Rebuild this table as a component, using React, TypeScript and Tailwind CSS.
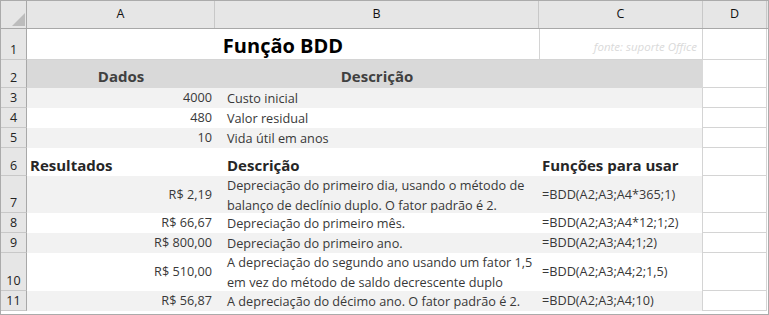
import React from 'react'

type Row = {
  n: number
  h: string
  fill: string
  a?: string
  b?: string[]
  c?: string
}

const rows: Row[] = [
  { n: 3, h: 'h-[20px]', fill: 'bg-[#f2f2f2]', a: '4000', b: ['Custo inicial'] },
  { n: 4, h: 'h-[20px]', fill: 'bg-white', a: '480', b: ['Valor residual'] },
  { n: 5, h: 'h-[20px]', fill: 'bg-[#f2f2f2]', a: '10', b: ['Vida útil em anos'] },
]

const results: Row[] = [
  {
    n: 7,
    h: 'h-[37px]',
    fill: 'bg-[#f2f2f2]',
    a: 'R$ 2,19',
    b: ['Depreciação do primeiro dia, usando o método de', 'balanço de declínio duplo. O fator padrão é 2.'],
    c: '=BDD(A2;A3;A4*365;1)',
  },
  { n: 8, h: 'h-[20px]', fill: 'bg-white', a: 'R$ 66,67', b: ['Depreciação do primeiro mês.'], c: '=BDD(A2;A3;A4*12;1;2)' },
  { n: 9, h: 'h-[20px]', fill: 'bg-[#f2f2f2]', a: 'R$ 800,00', b: ['Depreciação do primeiro ano.'], c: '=BDD(A2;A3;A4;1;2)' },
  {
    n: 10,
    h: 'h-[38px]',
    fill: 'bg-white',
    a: 'R$ 510,00',
    b: ['A depreciação do segundo ano usando um fator 1,5', 'em vez do método de saldo decrescente duplo'],
    c: '=BDD(A2;A3;A4;2;1,5)',
  },
  { n: 11, h: 'h-[20px]', fill: 'bg-[#f2f2f2]', a: 'R$ 56,87', b: ['A depreciação do décimo ano. O fator padrão é 2.'], c: '=BDD(A2;A3;A4;10)' },
]

function RowHead({ n }: { n: number }) {
  return (
    <div className="w-[26px] shrink-0 bg-[#e6e6e6] border-r border-r-[#a8a8a8] border-b border-b-[#c8c8c8] flex items-end justify-center pb-[1px] text-[12.5px] leading-[16px] text-[#222]">
      {n}
    </div>
  )
}

function ColD() {
  return <div className="w-[64px] shrink-0 border-b border-r border-[#d4d4d4] bg-white" />
}

function DataRow({ r }: { r: Row }) {
  return (
    <div className={`flex ${r.h}`}>
      <RowHead n={r.n} />
      <div className={`flex ${r.fill}`}>
        <div className="w-[188px] flex items-center justify-end pr-[3px]">{r.a}</div>
        <div className="w-[324px] flex flex-col justify-center pl-[12px] leading-[20px] whitespace-nowrap">
          {r.b?.map((line) => (
            <span key={line}>{line}</span>
          ))}
        </div>
        <div className="w-[164px] flex items-center pl-[3px] border-r border-r-[#d4d4d4]">{r.c}</div>
      </div>
      <ColD />
    </div>
  )
}

export default function App() {
  return (
    <div
      className="w-[769px] h-[315px] overflow-hidden bg-white border border-[#ababab] text-[12.7px] text-[#383838]"
      style={{ fontFamily: '"Open Sans", "Noto Sans", Arial, sans-serif' }}
    >
      {/* column headers */}
      <div className="flex h-[28px] bg-[#e6e6e6] border-b border-b-[#a8a8a8] text-[12.5px] text-[#111]">
        <div className="w-[26px] shrink-0 border-r border-r-[#a8a8a8] relative">
          <svg className="absolute left-[11px] top-[12px]" width="13" height="13" viewBox="0 0 13 13">
            <polygon points="13,0 13,13 0,13" fill="#bcbcbc" />
          </svg>
        </div>
        <div className="w-[188px] border-r border-r-[#c8c8c8] flex items-center justify-center">A</div>
        <div className="w-[324px] border-r border-r-[#c8c8c8] flex items-center justify-center">B</div>
        <div className="w-[164px] border-r border-r-[#c8c8c8] flex items-center justify-center">C</div>
        <div className="w-[64px] border-r border-r-[#c8c8c8] flex items-center justify-center">D</div>
      </div>

      {/* row 1 */}
      <div className="flex h-[31px]">
        <RowHead n={1} />
        <div className="w-[512px] border-b border-[#d4d4d4] flex items-end justify-center">
          <span className="text-[20px] font-bold text-black leading-[27px]">Função BDD</span>
        </div>
        <div className="w-[164px] border-b border-l border-r border-[#d4d4d4] flex items-end justify-end pr-[5px] pb-[4px]">
          <span className="italic text-[11.5px] text-[#dadada]">fonte: suporte Office</span>
        </div>
        <ColD />
      </div>

      {/* row 2 */}
      <div className="flex h-[28px]">
        <RowHead n={2} />
        <div className="flex bg-[#d9d9d9] font-bold text-[15px] text-[#404040] leading-[20px]">
          <div className="w-[188px] flex items-end justify-center pb-[2px]">Dados</div>
          <div className="w-[324px] flex items-end justify-center pb-[2px]">Descrição</div>
          <div className="w-[164px]" />
        </div>
        <ColD />
      </div>

      {rows.map((r) => (
        <DataRow key={r.n} r={r} />
      ))}

      {/* row 6 */}
      <div className="flex h-[28px]">
        <RowHead n={6} />
        <div className="flex bg-white font-bold text-[15px] text-[#262626] leading-[20px]">
          <div className="w-[188px] flex items-end pl-[3px] pb-[1px]">Resultados</div>
          <div className="w-[324px] flex items-end pl-[12px] pb-[1px]">Descrição</div>
          <div className="w-[164px] flex items-end pl-[3px] pb-[1px] border-r border-r-[#d4d4d4]">Funções para usar</div>
        </div>
        <ColD />
      </div>

      {results.map((r) => (
        <DataRow key={r.n} r={r} />
      ))}
    </div>
  )
}
